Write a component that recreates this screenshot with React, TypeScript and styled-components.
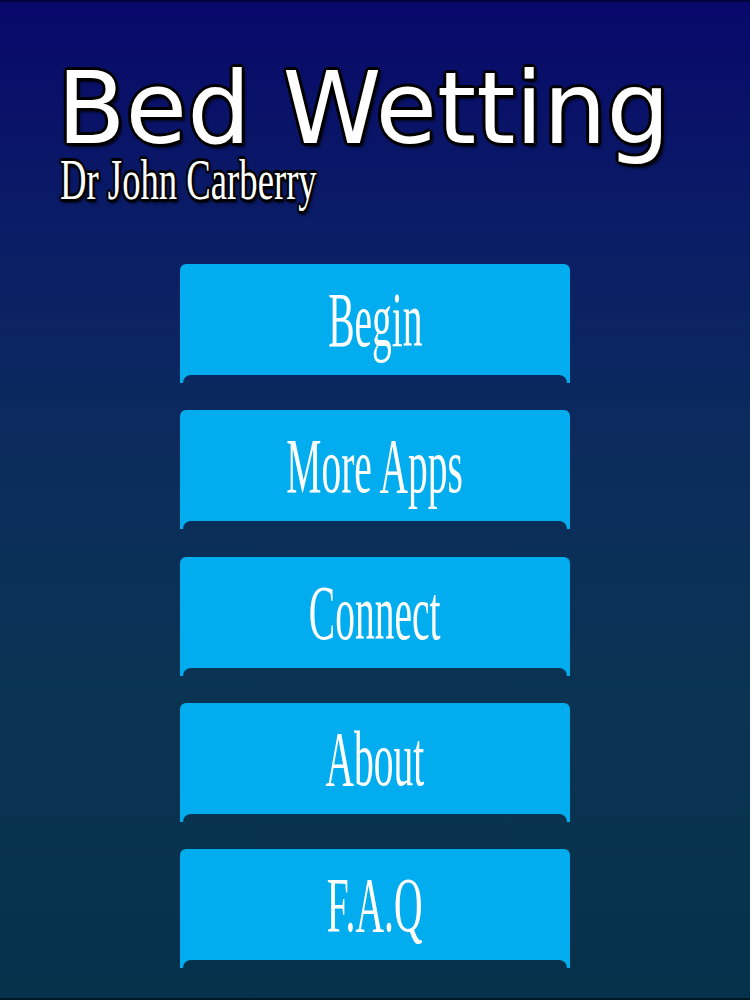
import styled, {createGlobalStyle} from "styled-components"

const GlobalStyle = createGlobalStyle`
  html, body {
    margin: 0;
    padding: 0;
  }
  body {
    background: #062f4a;
  }
`

const bgGradient = `linear-gradient(180deg, #08086a 0%, #0a1c66 22%, #0b2c5c 45%, #0a3452 70%, #06314b 100%)`

const items = ["Begin", "More Apps", "Connect", "About", "F.A.Q"]

const App = () => {
  return (
    <Page>
      <GlobalStyle/>
      <Header>
        <Title>Bed Wetting</Title>
        <Author><span>Dr John Carberry</span></Author>
      </Header>
      <Menu>
        {items.map(item => (
          <MenuButton key={item}>
            <Label>{item}</Label>
          </MenuButton>
        ))}
      </Menu>
    </Page>
  )
}

const Page = styled.div`
  box-sizing: border-box;
  width: 750px;
  height: 1000px;
  overflow: hidden;
  background: ${bgGradient};
  background-attachment: fixed;
  border-top: 2px solid #04043c;
  border-bottom: 2px solid #021826;
`

const Header = styled.div`
  padding: 58px 0 0 57px;
`

const outline = `
  text-shadow:
    -2px -2px 0 #000, 2px -2px 0 #000, -2px 2px 0 #000, 2px 2px 0 #000,
    0 -3px 0 #000, 0 3px 0 #000, -3px 0 0 #000, 3px 0 0 #000,
    3px 4px 3px rgba(0, 0, 0, 0.8);
`

const Title = styled.h1`
  margin: 0;
  font-family: "DejaVu Sans", "Liberation Sans", sans-serif;
  font-weight: normal;
  font-size: 100px;
  line-height: 98px;
  color: #fff;
  white-space: nowrap;
  ${outline}
`

const Author = styled.div`
  height: 44px;
  font-family: "Liberation Serif", serif;
  font-size: 56px;
  line-height: 44px;
  color: #fff;
  white-space: nowrap;
  span {
    display: inline-block;
    transform: scaleX(0.655);
    transform-origin: left center;
    margin-left: 3px;
    ${outline}
  }
`

const Menu = styled.div`
  display: flex;
  flex-direction: column;
  align-items: center;
  gap: 27.25px;
  margin-top: 62px;
`

const MenuButton = styled.div`
  position: relative;
  display: flex;
  align-items: center;
  justify-content: center;
  box-sizing: border-box;
  width: 390px;
  height: 119px;
  padding-bottom: 8px;
  background: #01adee;
  border-radius: 6px 6px 0 0;
  &::after {
    content: "";
    position: absolute;
    left: 3px;
    right: 3px;
    bottom: 0;
    height: 8px;
    border-radius: 8px 8px 0 0;
    background: ${bgGradient};
    background-attachment: fixed;
  }
`

const Label = styled.span`
  display: inline-block;
  font-family: "Liberation Serif", serif;
  font-size: 79px;
  line-height: 1;
  color: #fff;
  transform: scaleX(0.5);
  white-space: nowrap;
`

export default App
